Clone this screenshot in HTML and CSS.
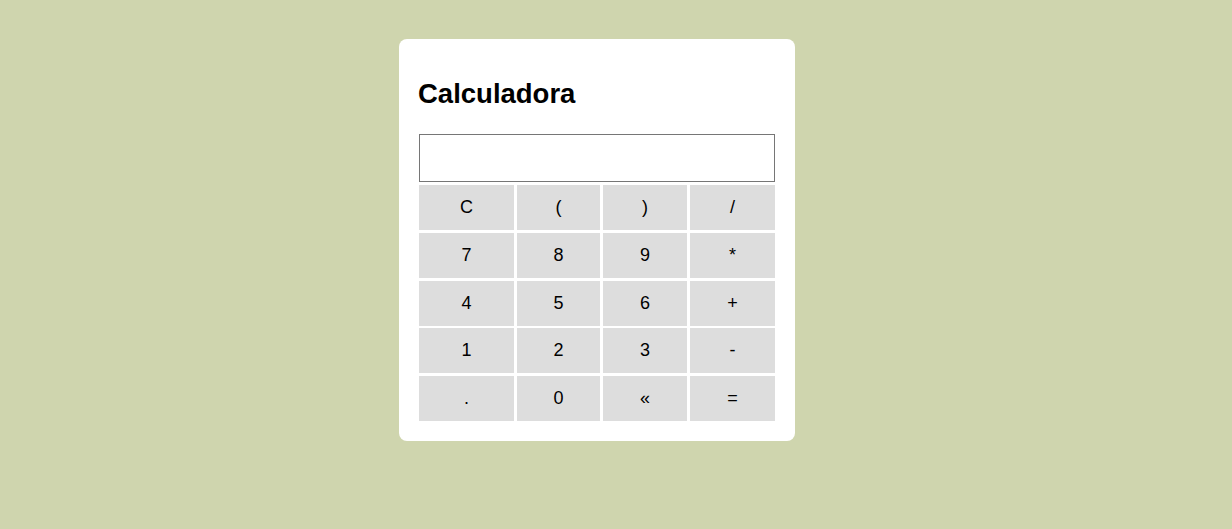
FILE: index.html
```html
<!DOCTYPE html>
<html lang="es">
<head>
<meta charset="utf-8">
<title>Calculadora</title>
<link rel="stylesheet" href="styles.css">
</head>
<body>
<main class="card">
  <h2 class="title">Calculadora</h2>
  <div class="calc">
    <input class="display" type="text">
    <div class="keys">
      <button class="key">C</button>
      <button class="key">(</button>
      <button class="key">)</button>
      <button class="key">/</button>
      <button class="key">7</button>
      <button class="key">8</button>
      <button class="key">9</button>
      <button class="key">*</button>
      <button class="key">4</button>
      <button class="key">5</button>
      <button class="key">6</button>
      <button class="key">+</button>
      <button class="key">1</button>
      <button class="key">2</button>
      <button class="key">3</button>
      <button class="key">-</button>
      <button class="key">.</button>
      <button class="key">0</button>
      <button class="key">&laquo;</button>
      <button class="key">=</button>
    </div>
  </div>
</main>
</body>
</html>
```

FILE: styles.css
```css
html, body {
  margin: 0;
  padding: 0;
}
body {
  background: #cfd5ae;
  font-family: "Liberation Sans", Arial, sans-serif;
  min-height: 529px;
  padding-top: 39px;
  box-sizing: border-box;
}
.card {
  margin-left: 399px;
  width: 356px;
  padding: 20px;
  background: #ffffff;
  border-radius: 8px;
}
.title {
  margin: 19px 0 25px -1px;
  font-size: 27.5px;
  line-height: 31px;
  font-weight: bold;
  color: #000;
}
.calc {
  display: flex;
  flex-direction: column;
  gap: 3px;
}
.display {
  box-sizing: border-box;
  width: 356px;
  height: 48px;
  margin: 0;
  border: 1px solid #767676;
  border-radius: 0;
  background: #fff;
  font-size: 18px;
  padding: 0 6px;
}
.keys {
  display: grid;
  grid-template-columns: 95px 83px 84px 85px;
  grid-auto-rows: 45px;
  column-gap: 3px;
  row-gap: 2.75px;
}
.key {
  margin: 0;
  padding: 0;
  border: none;
  background: #dddddd;
  color: #000;
  font-family: "Liberation Sans", Arial, sans-serif;
  font-size: 18px;
}
```
